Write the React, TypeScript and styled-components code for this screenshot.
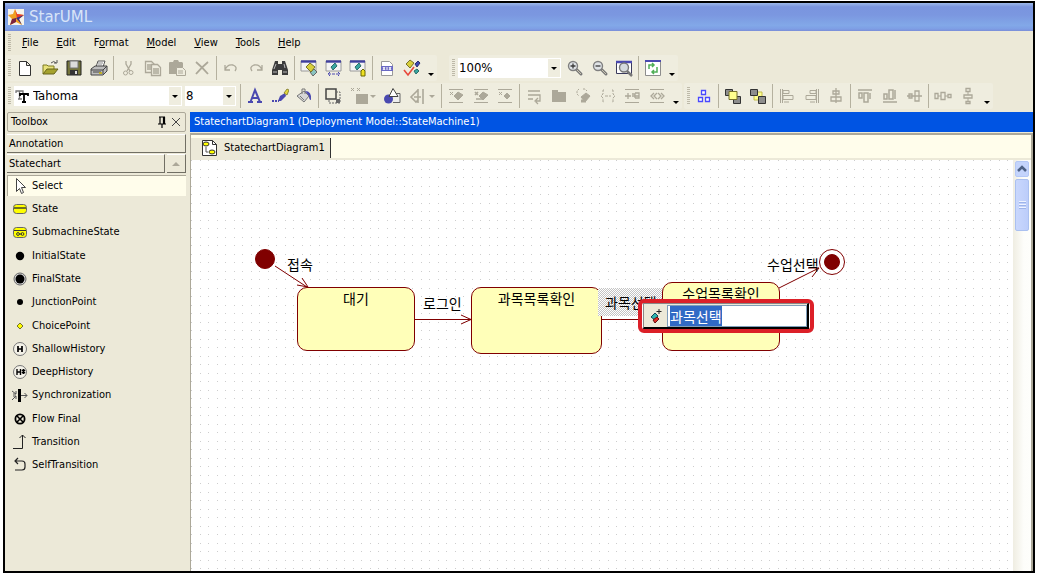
import React, { useEffect, useRef } from 'react';
import styled, { createGlobalStyle, css } from 'styled-components';

const face = '#ece9d8';
const bar = '#efeddf';
const cream = '#fffdeb';
const grey = '#aca899';
const maroon = '#800000';
const navy = '#4a49b0';

const GlobalStyle = createGlobalStyle`
  * { box-sizing: border-box; }
  body {
    margin: 0;
    background: #fff;
    color: #000;
    font-family: "DejaVu Sans Condensed", "DejaVu Sans", "Noto Sans CJK KR", sans-serif;
    font-size: 11px;
    line-height: 16px;
  }
  button, input, select { font: inherit; color: inherit; }
  ul { list-style: none; margin: 0; padding: 0; }
`;

const Window = styled.div`
  display: flex;
  flex-direction: column;
  min-height: calc(100vh - 3px);
  margin: 1px 2px 0 3px;
  border: 2px solid #000;
  background: ${face};
`;

const TitleBar = styled.header`
  display: flex;
  align-items: center;
  gap: 4px;
  height: 28px;
  padding: 0 2px;
  background: linear-gradient(#9db9ea 0, #7a95df 14%, #7b97e0 42%, #82a8e8 80%, #7e9fe5 92%, #7b8ed8 100%);
`;

const AppTitle = styled.h1`
  margin: 0;
  font-family: "DejaVu Sans", sans-serif;
  font-size: 15px;
  font-weight: 400;
  line-height: 20px;
  color: #d8e4f8;
`;

const MenuBar = styled.nav`
  display: flex;
  align-items: center;
  height: 24px;
`;

const MenuButton = styled.button`
  padding: 0 9px;
  border: 0;
  background: transparent;
  line-height: 16px;
`;

const Grip = styled.span`
  flex: none;
  width: 3px;
  height: 18px;
  margin: 0 2px 0 3px;
  background: repeating-linear-gradient(#bdb9a8 0 1px, transparent 1px 2px);
`;

const ToolRow = styled.div<{ $gap: number }>`
  display: flex;
  gap: ${p => p.$gap}px;
  height: 26px;
  margin-bottom: 2px;
`;

const Toolbar = styled.div`
  display: flex;
  align-items: center;
  background: ${bar};
  border-radius: 2px;
`;

const ToolGroup = styled.div`
  display: flex;
  align-items: center;
`;

const ToolButton = styled.button<{ $drop?: boolean }>`
  display: flex;
  align-items: center;
  justify-content: center;
  gap: 2px;
  width: ${p => (p.$drop ? 35 : 24)}px;
  height: 24px;
  padding: 0;
  border: 0;
  background: transparent;
  &:nth-of-type(even) { width: ${p => (p.$drop ? 35 : 25)}px; }
`;

const Separator = styled.span`
  width: 1px;
  height: 24px;
  margin: 0 2px;
  background: #b5b19f;
`;

const Overflow = styled.button`
  display: flex;
  align-items: flex-end;
  justify-content: center;
  width: 13px;
  height: 24px;
  padding: 0 0 4px;
  border: 0;
  background: transparent;
`;

const Triangle = styled.span<{ $color?: string }>`
  border: 3px solid transparent;
  border-top-color: ${p => p.$color || '#000'};
  border-bottom: 0;
`;

const Combo = styled.label<{ $width: number }>`
  display: flex;
  align-items: center;
  width: ${p => p.$width}px;
  height: 20px;
  margin: 0 2px 0 1px;
  background: #fff;
`;

const ComboSelect = styled.select`
  flex: 1;
  min-width: 0;
  height: 20px;
  padding: 0 1px;
  border: 0;
  background: transparent;
  appearance: none;
  font-size: 13px;
`;

const ComboArrow = styled.span`
  display: flex;
  align-items: center;
  justify-content: center;
  width: 12px;
  height: 18px;
  margin-right: 1px;
  background: ${bar};
`;

const Body = styled.div`
  display: flex;
  flex: 1;
  padding-top: 1px;
`;

const Toolbox = styled.aside`
  flex: none;
  width: 185px;
  padding: 0 4px 0 2px;
`;

const ToolboxHeader = styled.div`
  display: flex;
  align-items: center;
  height: 20px;
  margin-bottom: 2px;
  padding: 0 2px 0 3px;
  border: 1px solid ${grey};
  border-radius: 2px;
`;

const ToolboxTitle = styled.h2`
  flex: 1;
  margin: 0;
  font-size: 11px;
  font-weight: 400;
`;

const HeaderButton = styled.button`
  display: flex;
  justify-content: center;
  width: 14px;
  padding: 0;
  border: 0;
  background: transparent;
`;

const SectionRow = styled.div`
  display: flex;
  gap: 2px;
  height: 19px;
  margin-bottom: 1px;
`;

const raised = css`
  border: solid;
  border-width: 1px 1px 1px 0;
  border-color: #fff #716f64 #716f64 #fff;
  background: ${face};
`;

const SectionButton = styled.button`
  ${raised}
  flex: 1;
  padding: 0 2px;
  text-align: left;
`;

const SectionScroll = styled.button`
  ${raised}
  display: flex;
  align-items: center;
  justify-content: center;
  width: 19px;
  padding: 0;
`;

const UpTriangle = styled.span`
  border: 4px solid transparent;
  border-bottom-color: ${grey};
  border-top: 0;
`;

const ToolList = styled.ul`
  display: flex;
  flex-direction: column;
  height: 303px;
`;

const ToolItem = styled.li`
  display: flex;
  flex: 1;
`;

const ToolChoice = styled.button<{ $active?: boolean }>`
  display: flex;
  flex: 1;
  align-items: center;
  gap: 3px;
  padding: 0 4px;
  border: 0;
  margin: 1px 0;
  text-align: left;
  background: ${p => (p.$active ? cream : 'transparent')};
  box-shadow: ${p => (p.$active ? `inset 1px 1px 0 ${grey}` : 'none')};
`;

const Documents = styled.main`
  display: flex;
  flex: 1;
  flex-direction: column;
  min-width: 0;
`;

const DocTitle = styled.h2`
  height: 20px;
  margin: 0 0 1px;
  padding: 0 4px;
  background: #0054e3;
  color: #fff;
  font-size: 11px;
  font-weight: 400;
  line-height: 20px;
`;

const DocFrame = styled.div`
  display: flex;
  flex: 1;
  flex-direction: column;
  border: solid ${grey};
  border-width: 2px 2px 0 1px;
`;

const TabStrip = styled.div`
  display: flex;
  height: 25px;
  padding-top: 3px;
  border-bottom: 2px solid ${face};
  background: ${cream};
`;

const Tab = styled.button`
  display: flex;
  align-items: center;
  gap: 6px;
  padding: 0 5px 0 9px;
  border: 0;
  border-right: 1px solid #333;
  background: ${face};
`;

const Workspace = styled.div`
  display: flex;
  flex: 1;
`;

const Canvas = styled.div`
  position: relative;
  flex: 1;
  overflow: hidden;
  background: #fff;
`;

const Drawing = styled.svg`
  position: absolute;
  inset: 0;
  width: 100%;
  height: 100%;
`;

const diagramText = css`
  font-family: "Noto Sans CJK KR", sans-serif;
  font-size: 14px;
  line-height: 20px;
  white-space: nowrap;
`;

const StateNode = styled.div<{ $x: number; $y: number; $w: number; $h: number }>`
  ${diagramText}
  position: absolute;
  left: ${p => p.$x}px;
  top: ${p => p.$y}px;
  width: ${p => p.$w}px;
  height: ${p => p.$h}px;
  border: 1px solid ${maroon};
  border-radius: 10px;
  background: #ffffb9;
  text-align: center;
`;

const EdgeLabel = styled.div<{ $x: number; $y: number; $selected?: boolean }>`
  ${diagramText}
  position: absolute;
  left: ${p => p.$x}px;
  top: ${p => p.$y}px;
  padding: ${p => (p.$selected ? '4px 7px' : '0')};
  background: ${p => (p.$selected ? 'repeating-conic-gradient(#c4c4c4 0 25%, #fff 0 50%) 0 0 / 2px 2px' : 'none')};
`;

const QuickEdit = styled.div`
  position: absolute;
  left: 447px;
  top: 139px;
  display: flex;
  width: 176px;
  height: 34px;
  border: 4px solid #dc2028;
  border-radius: 6px;
  background: #fff;
`;

const QuickPanel = styled.div`
  display: flex;
  flex: 1;
  min-width: 0;
  margin: 0 1px;
  border: solid;
  border-width: 1px 2px 2px 1px;
  border-color: #888 #000 #000 #888;
  background: ${face};
`;

const QuickButton = styled.button`
  display: flex;
  flex: none;
  align-items: center;
  justify-content: center;
  width: 23px;
  padding: 0;
  border: 0;
  background: transparent;
`;

const QuickInput = styled.input`
  ${diagramText}
  flex: 1;
  min-width: 0;
  height: 22px;
  margin-top: 1px;
  padding: 0 2px;
  border: 1px solid #7f9db9;
  outline: 0;
  background: #fff;
  line-height: 16px;
  &::selection { background: #316ac5; color: #fff; }
`;

const ScrollBar = styled.div`
  width: 18px;
  padding: 1px 2px 0 2px;
  background: linear-gradient(90deg, #efede2, #fdfdfa 60%, #fefefb);
`;

const ScrollArrow = styled.button`
  display: flex;
  align-items: center;
  justify-content: center;
  width: 100%;
  height: 16px;
  padding: 0;
  border: 1px solid #b4c8f6;
  border-radius: 2px;
  background: #c4d4fc;
`;

const ScrollThumb = styled.div`
  display: flex;
  align-items: center;
  justify-content: center;
  height: 52px;
  margin-top: 2px;
  border: 1px solid #aac0f0;
  border-radius: 2px;
  background: linear-gradient(90deg, #c9d7fd, #bccdfa);
`;

const ThumbLines = styled.span`
  width: 7px;
  height: 9px;
  background: repeating-linear-gradient(#eef3ff 0 1px, #9db4ea 1px 2px, transparent 2px 3px);
`;

const magnifier = (
  <>
    <path d="M10.500 10.500 15 15" stroke="#777" strokeWidth="3" strokeLinecap="round" />
    <path d="M11 11l4 4" stroke="#c9c4b0" />
    <circle cx="7" cy="7" r="4.500" fill="#dfe3e6" stroke="#808080" strokeWidth="1.400" />
  </>
);

const miniWindow = (
  <>
    <path d="M1 2h15v10H1z" fill="#f4f4f4" stroke="#9a9a9a" />
    <path d="M1 2.500h15" stroke="#3f3f9e" strokeWidth="2.400" />
  </>
);

const tag = <path d="M7 9l4-4 5 3-5 5z" fill={grey} stroke={grey} />;
const rails = <path d="M2 2.500h14M2 15.500h14" stroke={grey} />;

const art: Record<string, React.ReactNode> = {
  blank: <path d="M3.500 2.500h7l4 4v10h-11zM10.500 2.500v4h4" fill="#fff" stroke="#333" />,
  open: (
    <>
      <path d="M2 15V6h4l1 1h6v3" fill="#e8e27a" stroke="#7c7a20" />
      <path d="M2 15l4-5h11l-4 5z" fill="#a5a22e" stroke="#66641c" />
      <path d="M10 4q3-3 5 0M13 4h3V1" stroke="#555" />
    </>
  ),
  save: (
    <>
      <path d="M2 2h14v14H2z" fill="#74743a" stroke="#222" />
      <path d="M5 2h8v7H5z" fill="#dcdcdc" stroke="#777" />
      <path d="M5 11h8v5H5z" fill="#333" />
      <path d="M10 12h2v3h-2z" fill="#ddd" />
    </>
  ),
  print: (
    <>
      <path d="M6 8l2-6h7l-2 6" fill="#fff" stroke="#555" />
      <path d="M1 10l4-3h12v5l-4 4H1z" fill="#bdbdbd" stroke="#444" />
      <path d="M1 11h12v4M13 11l4-4M3 13h8" stroke="#444" />
      <path d="M8 4h5M8 6h4" stroke="#888" />
      <path d="M9 14h3" stroke="#c8b400" strokeWidth="1.500" />
    </>
  ),
  cut: (
    <>
      <path d="M7 2v3l4 7M12 2v3l-4 7" stroke={grey} strokeWidth="1.300" />
      <circle cx="6.500" cy="14" r="2" stroke={grey} />
      <circle cx="12" cy="13.500" r="2" stroke={grey} />
    </>
  ),
  copy: (
    <>
      <path d="M1.500 2.500h6l3 3v8h-9zM3 6h5M3 8h5M3 10h5" fill={bar} stroke={grey} strokeWidth="1.300" />
      <path d="M7.500 5.500h6l3 3v8h-9zM9 10h6M9 12h6M9 14h6" fill={bar} stroke={grey} strokeWidth="1.300" />
    </>
  ),
  paste: (
    <>
      <path d="M1 4q0-1 1-1h3l1-2h4l1 2h3l1 1v11H1z" fill={grey} />
      <path d="M8.500 8.500h6l3 3v5h-9zM10 12h5M10 14h5" fill={bar} stroke={grey} />
    </>
  ),
  remove: <path d="M3 3q6 5 12 12M15 3Q9 8 3 15" stroke={grey} strokeWidth="1.800" />,
  undo: <path d="M3 6v5h5M3 11q2-6 8-5 5 2 2 6" stroke={grey} strokeWidth="1.300" />,
  redo: <path d="M15 6v5h-5M15 11q-2-6-8-5-5 2-2 6" stroke={grey} strokeWidth="1.300" />,
  find: (
    <>
      <path d="M4 2h3v3h4V2h3l3 9v5h-6v-5H7v5H1v-5z" fill="#3c3c3c" />
      <path d="M3 10l2-5M2 13h4M12 13h4M13 5l1 4" stroke="#b9b9b9" />
    </>
  ),
  winSelect: (
    <>
      {miniWindow}
      <path d="M10 13l4-3 3 3-4 4z" fill="#8ac4c0" stroke="#666" />
      <path d="M6 8l4-4 5 4-4 5z" fill="#d8cf3a" stroke="#77722a" />
    </>
  ),
  winFit: (
    <>
      {miniWindow}
      <path d="M6 8l4-4 2 3-4 4z" fill="#38a6a0" stroke="#2b6d6a" />
      <path d="M3 15h12M5 13l-2 2 2 2M13 13l2 2-2 2" stroke={navy} strokeDasharray="3 1" />
    </>
  ),
  winTag: (
    <>
      {miniWindow}
      <path d="M6 8l4-4 2 3-4 4z" fill="#38a6a0" stroke="#2b6d6a" />
      <path d="M12 12l2-2 2 2v5h-4z" fill="#eee020" stroke="#6b6600" />
    </>
  ),
  docLink: (
    <>
      <path d="M3.500 2.500h8l3 3v11h-11z" fill="#fff" stroke="#999" />
      <path d="M3 7h12v5H3z" fill="#6a69c4" />
      <path d="M5 8l2 3M7 8l-2 3M9 8v3M11 8l2 3M13 8l-2 3" stroke="#fff" />
    </>
  ),
  verify: (
    <>
      <path d="M3 5l4-4 4 3-4 5z" fill="#d8cf3a" stroke="#77722a" />
      <path d="M12 5l3-3 2 2-3 4z" fill="#3d48b5" stroke="#2b3070" />
      <path d="M11 12l3-2 2 2-3 3z" fill="#38a6a0" stroke="#2b6d6a" />
      <path d="M1 11l4 5 6-8" stroke="#e8483c" strokeWidth="1.600" />
    </>
  ),
  zoomIn: <>{magnifier}<path d="M4.500 7h5M7 4.500v5" stroke="#3b3b3b" strokeWidth="1.300" /></>,
  zoomOut: <>{magnifier}<path d="M4.500 7h5" stroke="#3b3b3b" strokeWidth="1.300" /></>,
  zoomFit: (
    <>
      <path d="M1.500 2.500h15v12h-15z" fill="#fff" stroke="#3a3a5c" />
      <path d="M1 3h16" stroke={navy} strokeWidth="2.500" />
      <path d="M12 12l5 5" stroke="#777" strokeWidth="2.500" />
      <circle cx="9" cy="8.500" r="4.500" fill="#d5dade" stroke="#777" strokeWidth="1.400" />
    </>
  ),
  refresh: (
    <>
      <path d="M1.500 1.500h15v15h-15z" fill="#fff" stroke="#8d8d8d" />
      <path d="M1 2h16" stroke={navy} strokeWidth="2" />
      <path d="M5 10V6h5M8 4l2 2-2 2M13 8v5H8M10 15l-2-2 2-2" stroke="#4fae55" strokeWidth="1.500" />
    </>
  ),
  fontTT: (
    <>
      <path d="M2 6V4h7v2M5.500 4v8M4 12h4" stroke="#777" strokeWidth="1.300" />
      <path d="M6 9V7h8v2M10 7v8M8 15h4" stroke="#000" strokeWidth="1.800" />
    </>
  ),
  fontColor: <path d="M2 15h5M11 15h5M4.500 15L9 3l5 12M6 11h6" stroke={navy} strokeWidth="2" />,
  lineColor: (
    <>
      <path d="M1 14h7" stroke={navy} strokeWidth="2" strokeDasharray="2 1" />
      <path d="M7 14l2-5 5-3 1 3-5 5z" fill={navy} />
      <path d="M13 6l3-4 2 1-2 5z" fill="#e5d93c" stroke="#77722a" strokeWidth=".800" />
    </>
  ),
  fillColor: (
    <>
      <path d="M2 9l7-5 5 5-5 6z" fill="#d6d6d6" stroke="#777" />
      <path d="M7 7V2h3v5M5 9l4 4" stroke="#777" />
      <path d="M10 4q7 0 6 9-2 0-2-4z" fill={navy} />
    </>
  ),
  autoResize: (
    <>
      <path d="M2 2h10v10H2z" stroke="#444" strokeWidth="1.500" />
      <path d="M12 5h4v11H5v-4" stroke="#666" strokeDasharray="2 1" />
      <path d="M12 12h4v4h-4z" fill="#666" />
    </>
  ),
  stereotype: <><path d="M6 7h12v10H6z" fill={grey} /><path d="M1 1l3 3M4 1L1 4M7 1l3 3M10 1L7 4" stroke={grey} /></>,
  shapes: (
    <>
      <path d="M12 6.500h5v9h-7" fill="#eee" stroke="#666" />
      <circle cx="5.500" cy="12" r="4.500" fill={navy} />
      <path d="M6 9.500l4-8 5 8z" fill="#fff" stroke="#444" />
    </>
  ),
  visibility: <path d="M9 2v14M9 3L2 10l5 5 2-2M5 10h7M14 2v15" stroke={grey} strokeWidth="1.600" />,
  hideA: <>{rails}{tag}<path d="M3 5l3 3M6 5L3 8" stroke={grey} /></>,
  hideB: <>{rails}{tag}<path d="M3 5l3 3M6 5L3 8M4 12h6" stroke={grey} strokeWidth="1.600" /></>,
  hideC: <>{rails}<path d="M8 9l3-3 3 3-3 3z" fill={grey} stroke={grey} /><path d="M3 5l3 3M6 5L3 8" stroke={grey} /></>,
  wrap: <path d="M3 4h12M3 8h12v6h-4M13 11l-3 3 3 3M3 12h5" stroke={grey} strokeWidth="1.300" />,
  folder: <path d="M2 3h6v2h8v10H2z" fill={grey} />,
  braceTag: (
    <>
      <path d="M7 10l5-4 4 3-5 6z" fill={grey} stroke={grey} />
      <path d="M7 14h5" stroke={grey} strokeWidth="3" />
      <path d="M5 2L3 4v3l2 2M9 2h2l2 2" stroke={grey} strokeDasharray="2 1" />
    </>
  ),
  braces: <path d="M5 3H4v4L2 9l2 2v4h1M13 3h1v4l2 2-2 2v4h-1M6 9h6" stroke={grey} strokeDasharray="3 1" />,
  plusRail: <>{rails}<path d="M2 9h6M5 6v6M9 7h3v4M12 6h4v5h-4M9 9h7" stroke={grey} strokeWidth="1.300" /></>,
  guillemets: <>{rails}<path d="M6 6L3 9l3 3M9 6L6 9l3 3M10 6l3 3-3 3M13 6l3 3-3 3" stroke={grey} strokeWidth="1.300" /></>,
  layout: <path d="M6.500 3.500h4v4h-4zM3.500 10.500h4v4h-4zM10.500 10.500h4v4h-4z" fill="#fff" stroke="#4a4aff" strokeWidth="1.300" />,
  front: (
    <>
      <path d="M1.500 2.500h7v6h-7zM9.500 9.500h7v7h-7z" fill="#8d8d8d" stroke="#333" />
      <path d="M5 4.500h8v8H5z" fill="#ffff8e" stroke="#77722a" />
    </>
  ),
  back: (
    <>
      <path d="M5 5h8v8H5z" fill="#ffff8e" stroke="#c2bb4a" />
      <path d="M1.500 2.500h7v6h-7zM9.500 9.500h7v7h-7z" fill="#8d8d8d" stroke="#333" />
    </>
  ),
  alignLeft: <path d="M2.500 2v14M4.500 2v14M5 3.500h6v3H5zM5 8.500h10v4H5zM6 15h5" stroke={grey} />,
  alignRight: <path d="M15.500 2v14M13.500 2v14M7 3.500h6v3H7zM3 8.500h10v4H3zM7 15h5" stroke={grey} />,
  alignCenter: <path d="M9 1v15M6 4h6v3H6zM4 10h10v4H4z" fill={bar} stroke={grey} strokeWidth="1.300" />,
  alignTop: <path d="M2 3h14M3 6h3v5H3zM8 6h4v9H8zM14 6v6" stroke={grey} strokeWidth="1.500" />,
  alignBottom: <path d="M2 15h14M3 7h3v5H3zM8 3h4v9H8zM14 3v9" stroke={grey} strokeWidth="1.500" />,
  alignMiddle: <path d="M2 9h15M4 7h3v4H4zM10 4h4v10h-4z" fill={bar} stroke={grey} strokeWidth="1.300" />,
  spaceH: (
    <>
      <path d="M1 9h16" stroke={grey} />
      <path d="M1 6.500h3v5H1zM7 5.500h4v7H7zM14 7.500h3v3h-3z" fill={bar} stroke={grey} strokeWidth="1.300" />
    </>
  ),
  spaceV: (
    <>
      <path d="M9 2v14" stroke={grey} />
      <path d="M7 1.500h4v3H7zM5 8h8v3H5zM7 14.500h4v2H7z" fill={bar} stroke={grey} strokeWidth="1.300" />
    </>
  ),

  logo: (
    <>
      <path d="M1 1h16v16H1z" fill="#f6f3ea" />
      <path d="M8 1l2 5 7 1-5 4 3 6-6-3-6 3 2-6-4-4 5-1z" fill="#f0a020" />
      <path d="M8 1l2 5 7 1-7 3z" fill="#e8392d" />
      <path d="M9 10l8-3-5 4 3 6z" fill="#3a2d86" />
      <path d="M9 10v4l-6 3 2-6z" fill="#7c2340" />
    </>
  ),
  pin: <path d="M6 4h6M7 4v7M10.500 4v7M11.500 4v7M5 11h8M9 11v4" stroke="#000" strokeWidth="1.200" />,
  close: <path d="M5 5l8 8M13 5l-8 8" stroke="#444" />,
  diagram: (
    <>
      <path d="M2.500 1.500h10l4 4v11h-14z" fill="#fff" stroke="#333" />
      <path d="M12.500 1.500v4h4" stroke="#333" />
      <ellipse cx="6" cy="5" rx="3" ry="2" fill="#ff0" stroke="#333" />
      <ellipse cx="12" cy="13" rx="3" ry="2" fill="#ff0" stroke="#333" />
      <path d="M6 8v5h2" stroke="#555" />
    </>
  ),
  select: <path d="M5.500 1.500v13l3-3 2 5 2-1-2-5h4z" fill="#fff" stroke="#444" />,
  state: (
    <>
      <rect x="2.500" y="4.500" width="13" height="9" rx="3" fill="#ff0" stroke="#666" />
      <path d="M3 8h12" stroke="#333" strokeWidth="1.400" />
    </>
  ),
  submachine: (
    <>
      <rect x="2.500" y="4.500" width="13" height="10" rx="3" fill="#ff0" stroke="#666" />
      <path d="M3 7.500h12M8 11h3" stroke="#333" />
      <circle cx="7" cy="11" r="1.400" stroke="#333" />
      <circle cx="11.500" cy="11" r="1.400" stroke="#333" />
    </>
  ),
  initial: <circle cx="9" cy="9" r="4.200" fill="#000" />,
  final: (
    <>
      <circle cx="9" cy="9" r="6" fill="#ddd" stroke="#666" />
      <circle cx="9" cy="9" r="4.500" fill="#000" />
    </>
  ),
  junction: <circle cx="9" cy="9" r="3" fill="#000" />,
  choice: <path d="M9 6l3 3-3 3-3-3z" fill="#ff0" stroke="#77722a" />,
  shallow: (
    <>
      <circle cx="9" cy="9" r="6.500" fill="#f4f2e8" stroke="#777" />
      <path d="M7 6v6M11 6v6M7 9h4" stroke="#000" strokeWidth="1.700" />
    </>
  ),
  deep: (
    <>
      <circle cx="9" cy="9" r="6.500" fill="#f4f2e8" stroke="#777" />
      <path d="M6 6v6M9.500 6v6M6 9h4M12.500 6v5M11 7l3 3M14 7l-3 3" stroke="#000" strokeWidth="1.400" />
    </>
  ),
  sync: (
    <>
      <path d="M8.500 3v13" stroke="#000" strokeWidth="3" />
      <path d="M1 5l4 3M1 14l4-4M5 5v3H2M5 13v-3H2M10 9.500h6M13.500 7l2.500 2.500-2.500 2.500" stroke="#555" />
    </>
  ),
  flowFinal: (
    <>
      <circle cx="9" cy="9" r="4.600" stroke="#000" strokeWidth="1.800" />
      <path d="M6 6l6 6M12 6l-6 6" stroke="#000" strokeWidth="1.600" />
    </>
  ),
  transition: <path d="M2 15.500h9.500V2M8.500 5l3-3 3 3" stroke="#222" />,
  selfTransition: <path d="M7 2L4 5l3 3M4 5h7q3 0 3 3v3q0 3-3 3H4" stroke="#222" strokeWidth="1.200" />,
  quick: (
    <>
      <path d="M12 2v5M9.500 4.500h5" stroke="#222" />
      <path d="M4 10l4-4 3 3-3 4z" fill="#2cb5ae" stroke="#145" />
      <path d="M6 13l4-3 2 2-4 4z" fill="#e02a22" stroke="#611" />
    </>
  ),
  scrollUp: <path d="M5 11l4-4 4 4" stroke="#4d6185" strokeWidth="2.500" />,
};

const Glyph = styled.svg`
  display: block;
  flex: none;
`;

function Icon({ name }: { name: string }) {
  return <Glyph width="18" height="18" viewBox="0 0 18 18" fill="none" aria-hidden="true">{art[name]}</Glyph>;
}

const dropButtons = ['stereotype', 'visibility'];

function ToolGroups({ groups }: { groups: string[][] }) {
  return (
    <>
      {groups.map((names, i) => (
        <React.Fragment key={names[0]}>
          {i > 0 && <Separator />}
          <ToolGroup>
            {names.map(name => (
              <ToolButton key={name} type="button" aria-label={name} $drop={dropButtons.includes(name)}>
                <Icon name={name} />
                {dropButtons.includes(name) && <Triangle $color={grey} />}
              </ToolButton>
            ))}
          </ToolGroup>
        </React.Fragment>
      ))}
    </>
  );
}

function MoreButton() {
  return <Overflow type="button" aria-label="More buttons"><Triangle /></Overflow>;
}

function ComboBox({ label, value, width, icon }: { label: string; value: string; width: number; icon?: string }) {
  return (
    <Combo $width={width}>
      {icon && <Icon name={icon} />}
      <ComboSelect aria-label={label} defaultValue={value}>
        <option>{value}</option>
      </ComboSelect>
      <ComboArrow><Triangle /></ComboArrow>
    </Combo>
  );
}

const menus = ['File', 'Edit', 'Format', 'Model', 'View', 'Tools', 'Help'];

const tools = [
  ['select', 'Select'],
  ['state', 'State'],
  ['submachine', 'SubmachineState'],
  ['initial', 'InitialState'],
  ['final', 'FinalState'],
  ['junction', 'JunctionPoint'],
  ['choice', 'ChoicePoint'],
  ['shallow', 'ShallowHistory'],
  ['deep', 'DeepHistory'],
  ['sync', 'Synchronization'],
  ['flowFinal', 'Flow Final'],
  ['transition', 'Transition'],
  ['selfTransition', 'SelfTransition'],
];

function Diagram() {
  const editor = useRef<HTMLInputElement>(null);
  useEffect(() => {
    editor.current?.focus();
    editor.current?.select();
  }, []);
  return (
    <Canvas>
      <Drawing fill="none" stroke={maroon}>
        <defs>
          <pattern id="grid" width="17" height="17" patternUnits="userSpaceOnUse">
            <path d="M0 0h1v1H0zM9 0h1v1H9zM0 9h1v1H0zM9 9h1v1H9z" fill="#cdcdcd" stroke="none" />
          </pattern>
        </defs>
        <rect width="100%" height="100%" fill="url(#grid)" stroke="none" />
        <circle cx="74" cy="99" r="9.500" fill={maroon} />
        <path d="M84 106l32 21M106 125l11 2-6-9" />
        <path d="M224 159.500h56M270 155l10 4.500-10 4.500" />
        <path d="M411 159.500h60" />
        <path d="M588 128l40-20M617 108l11 0-7 9" />
        <circle cx="641" cy="102" r="12.500" fill="#fff" />
        <circle cx="641" cy="102" r="7.500" fill={maroon} />
      </Drawing>
      <EdgeLabel $x={96} $y={94}>접속</EdgeLabel>
      <EdgeLabel $x={232} $y={133}>로그인</EdgeLabel>
      <EdgeLabel $x={576} $y={94}>수업선택</EdgeLabel>
      <StateNode $x={106} $y={127} $w={118} $h={64}>대기</StateNode>
      <StateNode $x={280} $y={127} $w={131} $h={67}>과목목록확인</StateNode>
      <EdgeLabel $x={407} $y={128} $selected>과목선택</EdgeLabel>
      <StateNode $x={471} $y={122} $w={118} $h={69}>수업목록확인</StateNode>
      <QuickEdit>
        <QuickPanel>
          <QuickButton type="button" aria-label="Quick actions"><Icon name="quick" /></QuickButton>
          <QuickInput ref={editor} aria-label="Transition name" defaultValue="과목선택" />
        </QuickPanel>
      </QuickEdit>
    </Canvas>
  );
}

export default function App() {
  return (
    <>
      <GlobalStyle />
      <Window>
        <TitleBar>
          <Icon name="logo" />
          <AppTitle>StarUML</AppTitle>
        </TitleBar>
        <MenuBar>
          <Grip />
          {menus.map(m => {
            const at = m === 'Format' ? 1 : 0;
            return (
              <MenuButton key={m} type="button">
                {m.slice(0, at)}<u>{m[at]}</u>{m.slice(at + 1)}
              </MenuButton>
            );
          })}
        </MenuBar>
        <ToolRow $gap={12}>
          <Toolbar>
            <Grip />
            <ToolGroups
              groups={[
                ['blank', 'open', 'save', 'print'],
                ['cut', 'copy', 'paste', 'remove'],
                ['undo', 'redo', 'find'],
                ['winSelect', 'winFit', 'winTag'],
                ['docLink', 'verify'],
              ]}
            />
            <MoreButton />
          </Toolbar>
          <Toolbar>
            <Grip />
            <ComboBox label="Zoom" value="100%" width={103} />
            <ToolGroups groups={[['zoomIn', 'zoomOut', 'zoomFit'], ['refresh']]} />
            <MoreButton />
          </Toolbar>
        </ToolRow>
        <ToolRow $gap={2}>
          <Toolbar>
            <Grip />
            <ComboBox label="Font" value="Tahoma" width={168} icon="fontTT" />
            <ComboBox label="Font size" value="8" width={51} />
            <Separator />
            <ToolGroups
              groups={[
                ['fontColor', 'lineColor', 'fillColor'],
                ['autoResize', 'stereotype', 'shapes', 'visibility'],
                ['hideA', 'hideB', 'hideC'],
                ['wrap', 'folder', 'braceTag', 'braces', 'plusRail', 'guillemets'],
              ]}
            />
            <MoreButton />
          </Toolbar>
          <Toolbar>
            <Grip />
            <ToolGroups
              groups={[
                ['layout'],
                ['front', 'back'],
                ['alignLeft', 'alignRight', 'alignCenter'],
                ['alignTop', 'alignBottom', 'alignMiddle'],
                ['spaceH', 'spaceV'],
              ]}
            />
            <MoreButton />
          </Toolbar>
        </ToolRow>
        <Body>
          <Toolbox>
            <ToolboxHeader>
              <ToolboxTitle>Toolbox</ToolboxTitle>
              <HeaderButton type="button" aria-label="Pin"><Icon name="pin" /></HeaderButton>
              <HeaderButton type="button" aria-label="Close"><Icon name="close" /></HeaderButton>
            </ToolboxHeader>
            <SectionRow>
              <SectionButton type="button">Annotation</SectionButton>
            </SectionRow>
            <SectionRow>
              <SectionButton type="button">Statechart</SectionButton>
              <SectionScroll type="button" aria-label="Scroll up"><UpTriangle /></SectionScroll>
            </SectionRow>
            <ToolList>
              {tools.map(([icon, label], i) => (
                <ToolItem key={icon}>
                  <ToolChoice type="button" $active={i === 0}>
                    <Icon name={icon} />
                    {label}
                  </ToolChoice>
                </ToolItem>
              ))}
            </ToolList>
          </Toolbox>
          <Documents>
            <DocTitle>StatechartDiagram1 (Deployment Model::StateMachine1)</DocTitle>
            <DocFrame>
              <TabStrip>
                <Tab type="button">
                  <Icon name="diagram" />
                  StatechartDiagram1
                </Tab>
              </TabStrip>
              <Workspace>
                <Diagram />
                <ScrollBar>
                  <ScrollArrow type="button" aria-label="Scroll up"><Icon name="scrollUp" /></ScrollArrow>
                  <ScrollThumb><ThumbLines /></ScrollThumb>
                </ScrollBar>
              </Workspace>
            </DocFrame>
          </Documents>
        </Body>
      </Window>
    </>
  );
}
